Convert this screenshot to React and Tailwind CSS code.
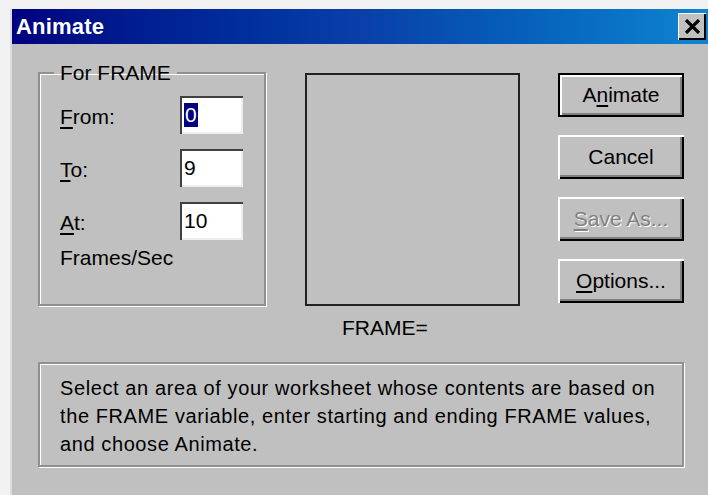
import React from "react";

const font = { fontFamily: '"Liberation Sans", Arial, sans-serif' };

// raised 3D button face
const RaisedButton = ({ children, isDefault, disabled }) => (
  <div
    className={
      "h-[44px] w-[126px] bg-[#c0c0c0] flex items-center justify-center text-[21px] " +
      (isDefault
        ? "border-2 border-black shadow-[inset_2px_2px_0_#fff,inset_-2px_-2px_0_#808080]"
        : "shadow-[inset_2px_2px_0_#fff,inset_-2px_-2px_0_#000,inset_-4px_-4px_0_#808080]") +
      (disabled ? " text-[#808080] [text-shadow:1px_1px_0_#fff]" : " text-black")
    }
  >
    {children}
  </div>
);

const SunkenInput = ({ value, selected }) => (
  <div className="h-[38px] w-[63px] bg-white flex items-center pl-[4px] text-[21px] shadow-[inset_2px_2px_0_#404040,inset_-2px_-2px_0_#eee]">
    {selected ? (
      <span className="bg-[#000080] text-white leading-[24px] px-[1px]">{value}</span>
    ) : (
      <span>{value}</span>
    )}
  </div>
);

const U = ({ children }) => <span className="underline underline-offset-[3px]">{children}</span>;

const FieldRow = ({ label, value, selected }) => (
  <div className="flex items-center h-[38px]">
    <div className="w-[120px] text-[21px] pt-[3px]">{label}</div>
    <SunkenInput value={value} selected={selected} />
  </div>
);

export default function App() {
  return (
    <div className="w-[708px] h-[495px] bg-[#f2f2f2] pt-[9px] pl-[10px] flex overflow-hidden" style={font}>
      <div className="flex-1 flex flex-col bg-[#c0c0c0] border-l-2 border-[#dcdcdc]">
        {/* title bar */}
        <div className="h-[35px] flex items-center justify-between bg-gradient-to-r from-[#000080] via-[#0a3fa8] to-[#1084d0] pl-[4px] pr-[2px]">
          <span className="text-white font-bold text-[22px] tracking-[0.2px]">Animate</span>
          <div className="h-[27px] w-[28px] bg-[#c0c0c0] flex items-center justify-center shadow-[inset_1px_1px_0_#fff,inset_-2px_-2px_0_#000]">
            <svg width="17" height="15" viewBox="0 0 17 15">
              <path d="M2 1 L15 14 M15 1 L2 14" stroke="#000" strokeWidth="3.2" />
            </svg>
          </div>
        </div>

        <div className="flex pl-[26px] pt-[18px]">
          {/* For FRAME group */}
          <fieldset className="w-[228px] h-[244px] border-2 border-[#909090] shadow-[1px_1px_0_#fff,inset_1px_1px_0_#fff] pl-[20px] m-0">
            <legend className="text-[21px] px-[6px] ml-[-6px] leading-[22px]">For FRAME</legend>
            <div className="flex flex-col gap-[15px] mt-[12px]">
              <FieldRow label={<><U>F</U>rom:</>} value="0" selected />
              <FieldRow label={<><U>T</U>o:</>} value="9" />
              <FieldRow label={<><U>A</U>t:</>} value="10" />
            </div>
            <div className="text-[21px] mt-[2px]">Frames/Sec</div>
          </fieldset>

          {/* preview area */}
          <div className="ml-[39px] pt-[11px] flex flex-col">
            <div className="w-[215px] h-[233px] border-2 border-[#222]" />
            <div className="ml-[37px] mt-[6px] text-[21px]">FRAME=</div>
          </div>

          {/* action buttons */}
          <div className="ml-[38px] pt-[11px] flex flex-col gap-[18px]">
            <RaisedButton isDefault>A<U>n</U>imate</RaisedButton>
            <RaisedButton>Cancel</RaisedButton>
            <RaisedButton disabled><U>S</U>ave As...</RaisedButton>
            <RaisedButton><U>O</U>ptions...</RaisedButton>
          </div>
        </div>

        {/* hint text */}
        <div className="ml-[26px] mt-[18px] w-[646px] h-[105px] border-2 border-[#909090] shadow-[1px_1px_0_#fff,inset_1px_1px_0_#fff] pl-[20px] pt-[10px]">
          <p className="w-[610px] text-[20px] leading-[28px] tracking-[0.6px]">
            Select an area of your worksheet whose contents are based on the FRAME variable, enter starting and ending FRAME values, and choose Animate.
          </p>
        </div>
      </div>
    </div>
  );
}
